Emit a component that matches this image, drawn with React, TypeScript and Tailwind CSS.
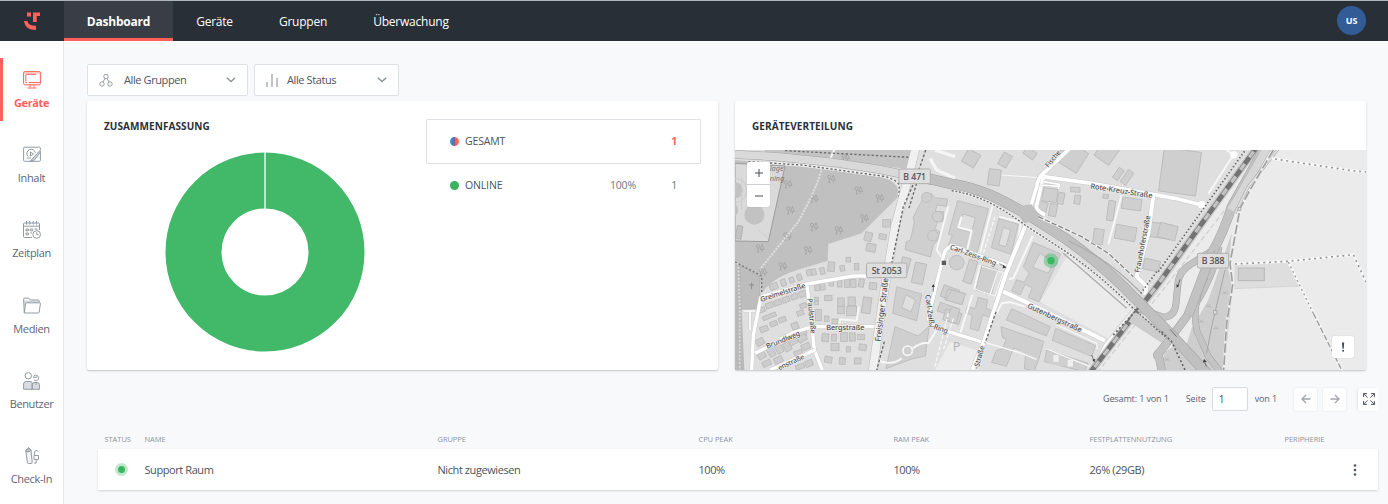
import React from "react";

type Pt = [number, number];
type Building = [number, number, number, number, number];

const westHouses: Building[] = [
  [455, 220, 24, 22, 0], [400, 260, 22, 26, 15], [443, 260, 22, 16, 10], [408, 293, 28, 24, 10],
  [340, 329, 14, 14, 0], [365, 350, 13, 20, 0], [322, 355, 14, 16, -10], [289, 350, 20, 28, 5], [262, 363, 14, 20, -15],
  [236, 366, 14, 18, -10], [222, 368, 14, 18, -10], [193, 382, 14, 18, -20], [170, 390, 14, 16, -20], [145, 398, 15, 20, -20], [116, 409, 24, 18, -20],
  [246, 411, 14, 22, -5], [263, 410, 14, 20, -5], [289, 401, 14, 14, 0], [314, 401, 14, 20, 0], [336, 400, 15, 24, 0], [355, 400, 16, 24, 0], [379, 399, 16, 24, 10], [414, 408, 22, 20, 5],
  [203, 432, 22, 18, -20], [178, 440, 20, 16, -20], [153, 449, 22, 16, -20], [128, 458, 22, 16, -20], [103, 466, 22, 16, -20], [80, 480, 20, 14, -20],
  [280, 444, 22, 16, 0], [244, 447, 12, 10, 0], [244, 459, 12, 10, 0], [318, 457, 20, 26, 0], [350, 454, 22, 26, 0], [395, 466, 26, 48, 8], [318, 480, 20, 22, 0], [350, 483, 30, 28, 0],
  [205, 467, 20, 14, -20], [196, 489, 20, 14, -20], [250, 495, 18, 34, 0], [275, 506, 14, 16, 0], [300, 514, 18, 14, 0], [103, 499, 42, 12, -22],
  [142, 509, 22, 14, -20], [116, 521, 22, 14, -20], [87, 537, 24, 16, -20], [180, 528, 20, 20, -20], [205, 548, 20, 16, 0],
  [75, 576, 24, 20, -30], [150, 566, 22, 20, -30], [175, 575, 26, 16, -30], [202, 565, 26, 20, -30], [108, 605, 20, 30, -30], [132, 595, 20, 30, -30], [157, 590, 20, 26, -30], [80, 616, 24, 20, -30], [212, 590, 26, 18, -25], [190, 610, 24, 18, -20],
  [271, 563, 20, 24, 5], [297, 563, 14, 20, 0], [327, 561, 20, 26, 0], [352, 561, 18, 24, 0], [378, 561, 20, 16, 0], [300, 591, 24, 22, 0], [340, 598, 12, 16, 0], [383, 592, 22, 18, 10], [280, 629, 22, 18, 10], [322, 633, 18, 20, 5], [368, 633, 20, 18, 0],
  [95, 640, 26, 16, -25], [130, 630, 26, 18, -25], [222, 640, 22, 18, -20], [195, 650, 26, 14, -20],
];

const blocks: Building[] = [
  [510, 345, 26, 45, 15], [552, 370, 34, 62, 12], [640, 480, 60, 28, 20], [645, 430, 50, 36, 20], [610, 200, 30, 30, 0],
  [708, 25, 42, 44, 30], [810, 30, 28, 40, 30], [778, 82, 36, 48, 8], [885, 10, 36, 24, 35], [1010, 20, 76, 70, 32], [1115, 8, 54, 56, 35],
  [1150, 72, 18, 36, 35], [1176, 82, 20, 44, 35], [1295, 62, 28, 110, 5],
  [945, 135, 44, 40, 8], [922, 172, 28, 34, 15], [954, 180, 22, 38, 10], [978, 145, 18, 34, 10], [1021, 119, 28, 14, 4], [1027, 149, 18, 26, 8], [1112, 139, 16, 12, 8],
  [1128, 182, 20, 60, 8], [1190, 162, 58, 34, 8], [1090, 260, 30, 46, 8], [1172, 249, 62, 42, 10], [1276, 242, 60, 44, 8], [1250, 345, 48, 32, 12],
  [706, 365, 26, 70, 17], [755, 390, 50, 76, 15], [660, 440, 54, 34, 16], [652, 500, 50, 34, 16], [1335, 65, 112, 132, 8], [1298, 245, 54, 44, 14],
];

const shapes: string[] = [
  "M565 135l25-4 8 12 40 4-4 22-28-4-6 24-8 10 16 14-8 24 14 8-4 24-14 14-10 38-76-22 4-24 12-4 12-54-4-14 10-20 18-34z",
  "M485 410l75 22-15 80-72-22z M513 434l-13 39 28 12 14-34z",
  "M668 152l92 24-35 138-85-28 12-30-12-3z M684 192l-16 44 42 12 11-45z",
  "M792 205l58 18-22 90-59-20z M805 232l-14 52 22 6 14-50z",
  "M895 277l82 35-65 143-32-12 12-30-22-10-14 32-26-12 15-34 23 8 15-28-18-18z M915 310l-22 42 47 18 15-34z",
  "M730 442l28 8-5 25 22 8-8 20-24-8-12 48-26-8 7-40-20-5 5-21 23 7z",
  "M650 420l42 12-12 32-46-14z M650 470l25 8-12 42-28-9z",
  "M830 476l116 54-12 28-120-48z M962 535l120 52-12 32-118-48z M935 600l125 40-12 25-120-30z",
  "M798 530l128 44-14 52-14 38-30-8 4-50-36-12-22 55-44-12 14-36 18-4 12-30-12-4z",
  "M480 530l70 28 33-30-12 90-38 8-80 30z",
];

const trees: Pt[] = [
  [330, 22], [158, 102], [288, 86], [370, 120], [433, 144], [236, 146], [165, 180], [387, 204],
  [236, 230], [310, 240], [156, 258], [74, 294], [218, 300], [142, 348], [82, 366],
];

function Box({ b, fill }: { b: Building; fill: string }) {
  const [x, y, w, h, r] = b;
  return (
    <rect x={x - w / 2} y={y - h / 2} width={w} height={h} transform={`rotate(${r} ${x} ${y})`} fill={fill} stroke="#bababa" strokeWidth="2.5" />
  );
}

function Road({ d, w, fill = "#fff", edge = "#cbcbcb" }: { d: string; w: number; fill?: string; edge?: string }) {
  return (
    <g fill="none" strokeLinejoin="round">
      <path d={d} stroke={edge} strokeWidth={w + 3} />
      <path d={d} stroke={fill} strokeWidth={w} />
    </g>
  );
}

function Label({ x, y, r, size = 21, children }: { x: number; y: number; r: number; size?: number; children: string }) {
  return (
    <text x={x} y={y} fontSize={size} transform={`rotate(${r} ${x} ${y})`} textAnchor="middle" dominantBaseline="central" fill="#3a3a3a" stroke="#ebebeb" strokeWidth="4" paintOrder="stroke">
      {children}
    </text>
  );
}

function Shield({ x, y, w, children }: { x: number; y: number; w: number; children: string }) {
  return (
    <g>
      <rect x={x - w / 2} y={y - 22} width={w} height="44" rx="5" fill="#dedede" stroke="#b0b0b0" strokeWidth="3" />
      <text x={x} y={y + 1} fontSize="26" textAnchor="middle" dominantBaseline="central" fill="#4a4a4a" stroke="#4a4a4a" strokeWidth=".5">{children}</text>
    </g>
  );
}

function CityMap() {
  return (
    <svg viewBox="0 0 1893 660" className="block h-[220px] w-full font-['Noto_Sans',sans-serif]" preserveAspectRatio="none">
      <rect width="1893" height="660" fill="#dfdfdf" />
      {/* open land */}
      <path d="M1000 312L1190 475 1120 565 915 455z" fill="#ebebeb" />
      <path d="M1565 0H1893V660H1085L1275 420 1450 170z" fill="#ebebeb" />
      <path d="M1500 342L1660 336 1693 408 1500 416z" fill="#dedede" stroke="#cfcfcf" strokeWidth="2" />
      <rect x="1510" y="354" width="78" height="38" fill="#d0d0d0" stroke="#b8b8b8" strokeWidth="3" />
      <path d="M645 575l100 32-12 53H600z" fill="#ececec" />
      {/* woodland */}
      <path d="M90 0H530L520 58 300 28 90 10z" fill="#c4c4c4" />
      <path d="M0 30L140 45 300 60 440 82Q495 95 490 140L380 250 280 282 278 332 180 362Q110 385 80 430L75 375 0 335z" fill="#c0c0c0" />
      <path d="M0 40L150 48 100 275 0 273z" fill="#dadada" stroke="#9c9c9c" strokeWidth="3" />
      <g fill="#c2c2c2"><circle cx="0" cy="121" r="24" /><circle cx="58" cy="194" r="30" /><circle cx="-10" cy="180" r="20" /><rect x="4" y="227" width="17" height="40" transform="rotate(8 12 247)" stroke="#aaa" strokeWidth="2" /></g>
      <g fill="none" stroke="#ccc" strokeWidth="3"><circle cx="0" cy="121" r="36" /><path d="M20 80v100M35 110l5 40M70 240l30 25" /></g>
      <path d="M15 345L75 378V476L18 478z" fill="#bdbdbd" stroke="#a5a5a5" strokeWidth="2" />
      <path d="M0 340L15 348 20 478 28 660H0z" fill="#b9b9b9" />
      <path d="M10 350L14 470V660" fill="none" stroke="#dcdcdc" strokeWidth="5" strokeDasharray="6 5" />
      <path d="M0 336L80 378V435" fill="none" stroke="#777" strokeWidth="4" strokeDasharray="6 6" />
      <path d="M50 398v20M43 405h14" stroke="#8a8a8a" strokeWidth="3" />
      {trees.map(([x, y], i) => (
        <g key={i} transform={`translate(${x} ${y})`} fill="none" stroke="#9b9b9b" strokeWidth="2">
          <circle cx="-5" cy="-5" r="5" /><path d="M-5 0v12M-8 12h6M7-11L1 4h12zM7 4v8" />
        </g>
      ))}
      <path d="M262 52C245 110 225 150 190 215L75 358" fill="none" stroke="#dcdcdc" strokeWidth="6" strokeDasharray="7 3" />
      {/* buildings */}
      {westHouses.map((b, i) => <Box key={i} b={b} fill="#cdcdcd" />)}
      {blocks.map((b, i) => <Box key={i} b={b} fill="#cfcfcf" />)}
      {shapes.map((d, i) => <path key={i} d={d} fill="#cfcfcf" fillRule="evenodd" stroke="#bababa" strokeWidth="2.5" />)}
      <g fill="#cfcfcf" stroke="#bababa" strokeWidth="2.5"><circle cx="575" cy="142" r="15" /><circle cx="608" cy="200" r="16" /><circle cx="594" cy="257" r="16" /><circle cx="665" cy="338" r="22" /></g>
      <circle cx="880" cy="595" r="22" fill="#cfcfcf" />
      <path d="M950 610l-8 30 40 12 6-28z" fill="#d0d0d0" />
      <g fill="#eee"><rect x="955" y="615" width="16" height="20" /><rect x="998" y="630" width="16" height="20" /></g>
      {/* minor ways */}
      <g fill="none" stroke="#f7f7f7" strokeWidth="6" strokeLinejoin="round">
        <path d="M640 168L605 300 620 320M680 200l-10 32 40 10-14 60M773 165L735 310M735 345L718 418M712 435L676 548M893 258L835 385 822 387M785 490L800 460 825 456 870 470M1160 135L1120 283M1475 0L1495 15 1420 132M793 200l65 18-10 60M313 522l2-14 50 4 6-42M425 630Q470 650 500 625M533 595Q560 575 580 580L605 540" />
        <path d="M750 577L860 610M860 610l45 18M965 525l120 55 2 18M935 597L1065 650M788 365L765 435" strokeWidth="4" />
        <circle cx="518" cy="602" r="14" strokeWidth="5" />
        <path d="M740 348l65 20-25 70-60-20M800 75l110 8" strokeWidth="3" />
      </g>
      <path d="M640 490L600 650M655 505L625 600M780 200L745 310" fill="none" stroke="#f7f7f7" strokeWidth="4" strokeDasharray="12 5" />
      {/* local streets */}
      <Road d="M50 660L55 555 78 440M215 400L228 500 238 600 262 660" w={10} />
      <Road d="M78 440L215 402 355 378H420M60 610L110 585Q180 535 250 530H420M105 660L240 600" w={10} />
      <Road d="M25 483H60M45 485V540" w={5} />
      <Road d="M300 -5L285 28" w={5} />
      <Road d="M660 288Q630 288 625 320L580 500Q575 520 640 545L755 580M645 285L810 345 818 355" w={10} />
      <Road d="M1005 -5L925 70Q908 85 905 110L887 170M925 80L1070 100 1320 145 1400 165M925 82L905 165Q900 180 930 195" w={11} />
      <Road d="M925 95l48 8-3 14M915 105l60 4" w={5} />
      <Road d="M872 225L815 365 745 580 712 660M805 425L870 455 1110 572M1120 575L1070 665M1255 138L1240 250 1205 380 1235 410 1230 435" w={12} />
      <Road d="M1120 580L1235 440" w={14} />
      <circle cx="1400" cy="164" r="11" fill="#fff" /><circle cx="1497" cy="15" r="11" fill="#fff" />
      {/* railway */}
      <path d="M1570 -15L1275 395 1060 675" fill="none" stroke="#c4c4c4" strokeWidth="21" />
      <path d="M1563 -15L1268 395 1053 675M1577 -15L1282 395 1067 675" fill="none" stroke="#8c8c8c" strokeWidth="3" />
      <path d="M1570 -15L1275 395 1060 675" fill="none" stroke="#737373" strokeWidth="14" strokeDasharray="24 22" />
      <path d="M1570 50L1295 405 1085 670" fill="none" stroke="#d2d2d2" strokeWidth="4" strokeDasharray="16 8" />
      <path d="M1535 -5L1270 365M1265 365L1210 440" fill="none" stroke="#626262" strokeWidth="5" strokeDasharray="4 7" />
      {/* highway interchange */}
      <path d="M1330 660L1370 535 1420 450 1490 250 1480 360 1493 410 1468 660z" fill="#cecece" />
      <path d="M1275 660L1290 605 1330 580 1400 660z" fill="#cecece" />
      <Road d="M1450 290Q1430 400 1340 520T1270 610L1280 660" w={22} fill="#c2c2c2" edge="#a3a3a3" />
      <Road d="M1435 300C1370 345 1330 350 1328 410L1323 460Q1320 500 1285 502L1210 475" w={18} fill="#c4c4c4" edge="#a3a3a3" />
      <Road d="M1410 380Q1370 460 1385 540L1420 620 1460 670" w={17} fill="#c4c4c4" edge="#a3a3a3" />
      <Road d="M1590 -10L1490 170Q1465 250 1430 310L1360 495" w={26} fill="#c2c2c2" edge="#a3a3a3" />
      <Road d="M1598 -10L1515 135 1487 180" w={24} fill="#d6d6d6" edge="#b0b0b0" />
      <Road d="M1635 -10L1540 110 1500 190" w={6} fill="#ddd" edge="#a5a5a5" />
      <path d="M1470 360L1430 530 1415 610M1440 300l-18 35" fill="none" stroke="#a7a7a7" strokeWidth="3" />
      <path d="M1615 0L1545 120 1515 175 1485 340 1493 405 1475 520 1466 660" fill="none" stroke="#f0f0f0" strokeWidth="7" />
      <path d="M1615 0L1545 120 1515 175 1485 340 1493 405 1475 520 1466 660" fill="none" stroke="#a0a0a0" strokeWidth="5" strokeDasharray="28 8" />
      {/* rural tracks */}
      <g fill="none">
        <path d="M1610 25L1850 62 1893 66M1500 342L1660 334 1855 314 1893 396M1660 336L1820 660" stroke="#f8f8f8" strokeWidth="8" />
        <path d="M1620 27L1850 62 1893 66M1500 342L1660 334 1855 314 1893 396" stroke="#999" strokeWidth="5" strokeDasharray="6 11" />
        <path d="M1660 336L1735 490" stroke="#999" strokeWidth="4" strokeDasharray="6 9" />
        <path d="M1735 490L1820 660" stroke="#999" strokeWidth="4" strokeDasharray="18 6" />
      </g>
      {/* main roads */}
      <Road d="M0 13L120 20 300 38 430 58 540 80" w={23} fill="#d9d9d9" edge="#a3a3a3" />
      <path d="M40 35L200 45 440 78Q480 85 493 105L490 190" fill="none" stroke="#f1f1f1" strokeWidth="7" />
      <path d="M40 35L200 45 440 78Q480 85 493 105L490 200M150 2L525 22" fill="none" stroke="#6a6a6a" strokeWidth="4" strokeDasharray="7 6" />
      <Road d="M543 -10L518 90 480 230 445 440 412 670" w={24} fill="#f0f0f0" edge="#bbb" />
      <path d="M572 0L545 80 505 170 470 340M448 575L425 660M783 485L750 580M545 100L520 180M580 100L650 112" fill="none" stroke="#666" strokeWidth="4" strokeDasharray="8 6" />
      <path d="M585 25L605 60 660 85M600 0L660 20" fill="none" stroke="#f5f5f5" strokeWidth="10" />
      <path d="M1190 500L1290 565" stroke="#ccc" strokeWidth="34" />
      <Road d="M525 78L590 88 650 102C740 115 800 150 880 195L995 268Q1110 350 1200 445L1300 545 1425 680" w={29} fill="#c0c0c0" edge="#a0a0a0" />
      <path d="M840 173L870 165 890 163 905 185 925 200 890 215 865 220z" fill="#c0c0c0" />
      <path d="M650 122C740 136 800 175 870 225L985 300Q1090 370 1190 470" fill="none" stroke="#f0f0f0" strokeWidth="7" />
      <path d="M650 122C740 136 800 175 870 225L985 300Q1090 370 1190 470L1290 560" fill="none" stroke="#6c6c6c" strokeWidth="4" strokeDasharray="6 5" />
      <path d="M910 200L1040 260 1120 310 1195 380" fill="none" stroke="#f2f2f2" strokeWidth="8" />
      <path d="M910 200L1040 260 1120 310 1195 380" fill="none" stroke="#888" strokeWidth="4" strokeDasharray="16 6" />
      <path d="M1000 273Q1110 320 1215 425M985 310Q1090 400 1175 475" fill="none" stroke="#acacac" strokeWidth="4" />
      <path d="M1210 475L1130 560M1280 545L1310 575 1350 660" fill="none" stroke="#666" strokeWidth="5" strokeDasharray="6 7" />
      {/* direction marks */}
      <g fill="none" stroke="#444" strokeWidth="2"><path d="M793 341l18 9M1070 615l8 20M595 425v-20M1335 388l-6 20M1305 538l20 22M1415 650l-8-18" /></g>
      <g fill="#3d3d3d"><path d="M805 345l10 8-12 2zM1072 629l9-2-3 10zM590 411l10 0-5-9zM1324 403l9 4-8 6zM1404 637l3-10 9 9z" /></g>
      <rect x="620" y="332" width="13" height="13" fill="#5a5a5a" />
      <g fill="#ddd" stroke="#999" strokeWidth="2"><rect x="1436" y="482" width="10" height="10" /><rect x="1509" y="172" width="9" height="9" /></g>
      <g fill="none" stroke="#b2b2b2" strokeWidth="2"><path d="M1462 430h16M1465 422l5 8 5-8M1413 470h16M1416 462l5 8 5-8M1391 516h16M1394 508l5 8 5-8M1436 536h16M1439 528l5 8 5-8M1288 630h16M1291 622l5 8 5-8" /></g>
      {/* labels */}
      <text x="104" y="63" fontSize="22" fontStyle="italic" fill="#757575">lage</text>
      <text x="104" y="92" fontSize="22" fontStyle="italic" fill="#757575">ning</text>
      <Label x={143} y={427} r={-18}>Greimelstraße</Label>
      <Label x={230} y={498} r={84}>Paulstraße</Label>
      <Label x={331} y={530} r={0} size={22}>Bergstraße</Label>
      <Label x={144} y={569} r={-22}>Brundlweg</Label>
      <Label x={168} y={636} r={-25} size={20}>enstraße</Label>
      <Label x={438} y={479} r={-83} size={24}>Freisinger Straße</Label>
      <Label x={584} y={478} r={82}>Carl-Zeiß</Label>
      <Label x={610} y={533} r={20}>s-Ring</Label>
      <Label x={715} y={315} r={20}>Carl-Zeiss-Ring</Label>
      <Label x={732} y={622} r={-75}>-Straße</Label>
      <Label x={953} y={26} r={-50} size={20}>Fische</Label>
      <Label x={1160} y={121} r={9} size={22}>Rote-Kreuz-Straße</Label>
      <Label x={1222} y={282} r={-79}>Fraunhoferstraße</Label>
      <Label x={960} y={502} r={25} size={22}>Gutenbergstraße</Label>
      <text x="665" y="604" textAnchor="middle" fontSize="38" fill="#b4b4b4">P</text>
      <Shield x={539} y={79} w={94}>B 471</Shield>
      <Shield x={455} y={361} w={121}>St 2053</Shield>
      <Shield x={1434} y={332} w={94}>B 388</Shield>
      <circle cx="948" cy="332" r="22" fill="#41b968" opacity=".45" />
      <circle cx="948" cy="332" r="11" fill="#38b860" />
    </svg>
  );
}

const line = { fill: "none", stroke: "currentColor", strokeWidth: 1 } as const;

const DeviceIcon = () => (
  <svg viewBox="0 0 18 18" className="size-[18px]" {...line}>
    <rect x=".6" y=".6" width="16.8" height="13.2" rx="1.2" /><path d="M1 1.4h16v1.2H1z" fill="currentColor" fillOpacity=".5" stroke="none" />
    <path d="M3 3.3h10M6 11.6h11M2.5 11.6h1.5M7 14v2.5M11 14v2.5M4.5 17h9M2.8 3.5v7" />
  </svg>
);
const ContentIcon = () => (
  <svg viewBox="0 0 18 18" className="size-[18px]" {...line}>
    <path d="M17.4 6v8.3a1 1 0 0 1-1 1H1.6a1 1 0 0 1-1-1V2.2a1 1 0 0 1 1-1h14.8a1 1 0 0 1 1 1V4" />
    <path d="M5 10.5A4.3 4.3 0 1 1 12.4 7M4 12h4M7.5 6v4l3-2z" /><path d="M17 4.5L10 12l-3 3.5 4.5-1.6L17.5 6z" fill="currentColor" fillOpacity=".4" />
  </svg>
);
const ScheduleIcon = () => (
  <svg viewBox="0 0 18 18" className="size-[18px]" {...line}>
    <path d="M9 16.5H1.5a1 1 0 0 1-1-1V3a1 1 0 0 1 1-1h14a1 1 0 0 1 1 1v6M.5 5.2h16M3.5 0v3.5M6.8 0v3.5M10.2 0v3.5M13.5 0v3.5" />
    <path d="M3 8h2.5v1.8H3zM7.2 8h2.5v1.8H7.2zM11.5 8H14v1.5M3 12h2.5v1.8H3zM7.2 12h2" /><circle cx="13.7" cy="13.5" r="3.8" /><path d="M13.7 11.3v2.4h2" />
  </svg>
);
const MediaIcon = () => (
  <svg viewBox="0 0 18 18" className="size-[18px]" {...line}>
    <path d="M1.3 15.8L.6 2.2a1 1 0 0 1 1-1h4.2l1.600 1.800h7.800a1 1 0 0 1 1 1v1.500" /><path d="M1.200 3.500h14.500v2H3L1.500 10z" fill="currentColor" fillOpacity=".4" stroke="none" />
    <path d="M1.300 16l1.200-9.300a1 1 0 0 1 1-.9h13a.8.8 0 0 1 .9 1l-1.200 8.400a1 1 0 0 1-1 .8z" />
  </svg>
);
const UsersIcon = () => (
  <svg viewBox="0 0 18 18" className="size-[18px]" {...line}>
    <circle cx="5.300" cy="3.800" r="3.200" /><path d="M.6 17.300v-5.300a2.500 2.500 0 0 1 2.500-2.500h4a2.500 2.500 0 0 1 2 1v6.800z" fill="currentColor" fillOpacity=".35" />
    <path d="M9.300 17.300v-4.800a2 2 0 0 1 2-2h2.800a2.300 2.300 0 0 1 2.300 2.300v4.500z" fill="currentColor" fillOpacity=".35" /><path d="M10.500 4.500a2.800 2.800 0 1 1 .5 3.500M10 5.300h3l1.500-1M13 11v2" />
  </svg>
);
const CheckInIcon = () => (
  <svg viewBox="0 0 18 18" className="size-[18px]" {...line}>
    <path d="M2.800 3.500L5.500 1l2.500 2 1.200 12a1.300 1.300 0 0 1-1.300 1.500H5.600a1.300 1.300 0 0 1-1.300-1.300z" fill="currentColor" fillOpacity=".12" /><path d="M2.500 3.500L5.500.8l2.500 2-1 1.500-3 .7z" fill="currentColor" fillOpacity=".5" />
    <path d="M15 4.500a1.800 1.800 0 0 0-3.400.5v3.500M11 8.500h4.500v4H11zM13.200 12.500v3.500H11" />
  </svg>
);

const sideItems = [
  { name: "Geräte", Icon: DeviceIcon, active: true },
  { name: "Inhalt", Icon: ContentIcon },
  { name: "Zeitplan", Icon: ScheduleIcon },
  { name: "Medien", Icon: MediaIcon },
  { name: "Benutzer", Icon: UsersIcon },
  { name: "Check-In", Icon: CheckInIcon },
];

const Chevron = () => (
  <svg viewBox="0 0 10 6" className="h-[6px] w-[10px]" fill="none" stroke="#8b949d" strokeWidth="1.400"><path d="M.8.8L5 4.600 9.200.8" /></svg>
);

function Header() {
  return (
    <header className="flex h-[41px] items-stretch border-t border-[#aeb6ba] bg-[#282f37] text-[12px] tracking-[-0.22px] text-white">
      <div className="flex w-16 items-center justify-center">
        <svg viewBox="0 0 16 18" className="h-[18px] w-4" fill="#ff625e">
          <path d="M3 .5h4v4H3zM9 .5h7v3.600h-3.300v6H9zM0 9h3.500q0 4.800 8.500 4.800V18Q1 18 0 9z" />
        </svg>
      </div>
      <nav className="flex">
        <a className="flex w-[109px] items-center justify-center border-b-[3px] border-[#ff5e59] bg-[#393d46] font-bold"><span className="pt-[4px]">Dashboard</span></a>
        <a className="flex w-[83px] items-center justify-center pt-px">Geräte</a>
        <a className="flex w-[94px] items-center justify-center pt-px">Gruppen</a>
        <a className="flex w-[122px] items-center justify-center pt-px">Überwachung</a>
      </nav>
      <div className="ml-auto mr-[22px] mt-[5px] flex size-[29px] items-center justify-center rounded-full bg-[#325c96] pt-px text-[9px] font-bold">US</div>
    </header>
  );
}

function Sidebar() {
  return (
    <aside className="h-[463px] w-16 shrink-0 overflow-hidden border-r border-[#e6e9ec] bg-white pt-[17px]">
      {sideItems.map(({ name, Icon, active }) => (
        <a key={name} className={active ? "mb-[12px] flex h-[63px] flex-col items-center border-l-[3px] border-[#ff625e] pr-[3px] pt-[13px] text-[11px] font-bold tracking-[-0.4px] text-[#ff625e]" : "mb-[12.300px] flex h-[63px] flex-col items-center pt-[13px] text-[11px] tracking-[-0.35px] text-[#5d6673]"}>
          <span className={active ? "" : "text-[#929ba5]"}><Icon /></span>
          <span className="mt-[6px] leading-4">{name}</span>
        </a>
      ))}
    </aside>
  );
}

function Filters() {
  return (
    <div className="flex gap-[6px] text-[11px] tracking-[-0.4px] text-[#4c5560]">
      <button className="flex h-8 w-[161px] items-center rounded-[2px] border border-[#dde2e6] bg-white pl-[11px] pr-[11px]">
        <svg viewBox="0 0 14 14" className="size-[14px]" fill="none" stroke="#949da6"><circle cx="7" cy="3.500" r="2.200" /><circle cx="3" cy="11" r="2.200" /><circle cx="11" cy="11" r="2.200" /><path d="M6 5.500L4 9M8 5.500L10 9" /></svg>
        <span className="ml-[11px] mr-auto pt-px">Alle Gruppen</span>
        <Chevron />
      </button>
      <button className="flex h-8 w-[145px] items-center rounded-[2px] border border-[#dde2e6] bg-white pl-[11px] pr-[11px]">
        <svg viewBox="0 0 12 14" className="h-[14px] w-3" stroke="#949da6" strokeWidth="1.200"><path d="M1 9v5M6 1v13M11 5v9" /></svg>
        <span className="ml-[9px] mr-auto pt-px">Alle Status</span>
        <Chevron />
      </button>
    </div>
  );
}

function Summary() {
  return (
    <section className="flex h-[269px] w-[631px] justify-between rounded-[2px] bg-white pl-[17px] pr-[17px] pt-[18px] shadow-[0_1px_2px_rgba(0,0,0,0.22)]">
      <div>
        <h2 className="-mt-px text-[10px] font-bold leading-4 tracking-[0.08px] text-[#2b3138]">ZUSAMMENFASSUNG</h2>
        <svg viewBox="0 0 200 200" className="ml-[61px] mt-[18px] size-[200px]">
          <circle cx="100" cy="100" r="71.500" fill="none" stroke="#41b968" strokeWidth="56" /><path d="M100 0v57" stroke="#fff" strokeWidth="1.300" />
        </svg>
      </div>
      <div className="w-[275px] text-[10.500px] tracking-[-0.15px] text-[#4b535d]">
        <div className="flex h-[45px] items-center rounded-[1px] border border-[#dfe2e7] pl-[23px] pr-[23px]">
          <span className="mr-[6px] size-[9px] rounded-full bg-[linear-gradient(90deg,#3e9fca_0%,#4d7fad_30%,#8259a8_50%,#fb625f_62%,#ff6b52_100%)]" />
          <span className="pt-px">GESAMT</span><b className="ml-auto pt-px text-[#ff625e]">1</b>
        </div>
        <div className="flex h-[43px] items-center pl-6 pr-6">
          <span className="mr-[6px] size-[9px] rounded-full bg-[#39b35e]" />
          <span className="pt-px">ONLINE</span><span className="ml-auto pt-px text-[#6d7580]">100%</span><span className="w-[41px] pt-px text-right text-[#6d7580]">1</span>
        </div>
      </div>
    </section>
  );
}

function Distribution() {
  return (
    <section className="h-[269px] w-[631px] rounded-[2px] bg-white shadow-[0_1px_2px_rgba(0,0,0,0.22)]">
      <h2 className="h-[49px] pl-[17px] pt-[17px] text-[10px] font-bold leading-4 tracking-[0.08px] text-[#2b3138]">GERÄTEVERTEILUNG</h2>
      <div className="relative h-[220px] overflow-hidden">
        <CityMap />
        <div className="absolute left-3 top-3 w-[23px] rounded-[2px] bg-white shadow-[0_0_1px_#999]">
          <div className="flex h-[23px] items-center justify-center border-b border-[#ccd0d4]"><svg viewBox="0 0 8 8" className="size-2" stroke="#444c55"><path d="M0 4h8M4 0v8" /></svg></div>
          <div className="flex h-[22px] items-center justify-center"><svg viewBox="0 0 8 8" className="size-2" stroke="#444c55"><path d="M0 4h8" /></svg></div>
        </div>
        <div className="absolute bottom-3 right-3 flex size-[22px] items-center justify-center rounded-[2px] bg-white shadow-[0_0_1px_#aab]">
          <svg viewBox="0 0 4 10" className="h-[10px] w-1" fill="#3c4650"><path d="M1 .5h2.200L2.700 6.800H1.500z" /><circle cx="2.100" cy="8.700" r="1" /></svg>
        </div>
      </div>
    </section>
  );
}

function Pagination() {
  return (
    <div className="mt-[17px] flex h-6 items-center justify-end pr-[10px] text-[9px] tracking-[-0.12px] text-[#59626d]">
      <span>Gesamt: 1 von 1</span>
      <span className="ml-[17px]">Seite</span>
      <span className="ml-[6px] mr-[7px] flex h-6 w-9 items-center rounded-[2px] border border-[#d6dce2] bg-white pl-[6px] text-[10px] text-[#3c4590]">1</span>
      <span>von 1</span>
      <span className="ml-[17px] flex size-[23px] items-center justify-center rounded-[2px] bg-[#fdfdfe] shadow-[0_0_2px_rgba(0,0,0,0.12)]"><svg viewBox="0 0 10 10" className="size-[10px]" fill="none" stroke="#a1a7ad" strokeWidth="1.300"><path d="M9.500 5H1M5 1L1 5l4 4" /></svg></span>
      <span className="ml-[6px] flex size-[23px] items-center justify-center rounded-[2px] bg-[#fdfdfe] shadow-[0_0_2px_rgba(0,0,0,0.12)]"><svg viewBox="0 0 10 10" className="size-[10px]" fill="none" stroke="#a1a7ad" strokeWidth="1.300"><path d="M.5 5H9M5 1l4 4-4 4" /></svg></span>
      <span className="ml-3 flex h-[23px] w-5 items-center justify-end rounded-l-[2px] bg-white pr-[3px] shadow-[-1px_0_2px_rgba(0,0,0,0.08)]"><svg viewBox="0 0 12 12" className="size-3" fill="none" stroke="#4d5762" strokeWidth="1"><path d="M.6 4V.6H4M.6.6l4 4M8 .6h3.400V4M11.400.6l-4 4M.6 8v3.400H4M.6 11.400l4-4M8 11.400h3.400V8M11.400 11.400l-4-4" /></svg></span>
    </div>
  );
}

function DeviceTable() {
  return (
    <div className="ml-[11px] w-[1280px]">
      <div className="mt-[21px] grid h-[17px] grid-cols-[40px_293px_261px_195px_196px_195px_1fr] items-center pb-px pl-[6.500px] text-[7.500px] tracking-[-0.06px] text-[#8c949c]">
        <span>STATUS</span><span>NAME</span><span>GRUPPE</span><span>CPU PEAK</span><span>RAM PEAK</span><span>FESTPLATTENNUTZUNG</span><span>PERIPHERIE</span>
      </div>
      <div className="grid h-[41px] grid-cols-[40px_293px_261px_195px_196px_195px_1fr] items-center bg-white pl-[6.500px] text-[11px] tracking-[-0.42px] text-[#4b535d] shadow-[0_1px_2px_rgba(0,0,0,0.15)]">
        <span className="ml-[10.500px] flex size-[13px] items-center justify-center rounded-full bg-[#c0e9cc]"><span className="size-[7px] rounded-full bg-[#3ab560]" /></span>
        <span className="pt-[2px]">Support Raum</span><span className="pt-[2px]">Nicht zugewiesen</span><span className="pt-[2px]">100%</span><span className="pt-[2px]">100%</span><span className="pt-[2px]">26% (29GB)</span>
        <svg viewBox="0 0 4 14" className="ml-auto mr-[21.500px] h-[14px] w-1" fill="#4b5560"><circle cx="2" cy="2.500" r="1.300" /><circle cx="2" cy="7" r="1.300" /><circle cx="2" cy="11.500" r="1.300" /></svg>
      </div>
    </div>
  );
}

export default function App() {
  return (
    <div className="h-[504px] w-[1388px] overflow-hidden bg-[#f8f9fb] font-['Open_Sans',sans-serif]">
      <Header />
      <div className="flex">
        <Sidebar />
        <main className="min-w-0 flex-1 pl-[23px] pt-[23px]">
          <Filters />
          <div className="mt-[5px] flex gap-[17px]"><Summary /><Distribution /></div>
          <Pagination />
          <DeviceTable />
        </main>
      </div>
    </div>
  );
}
